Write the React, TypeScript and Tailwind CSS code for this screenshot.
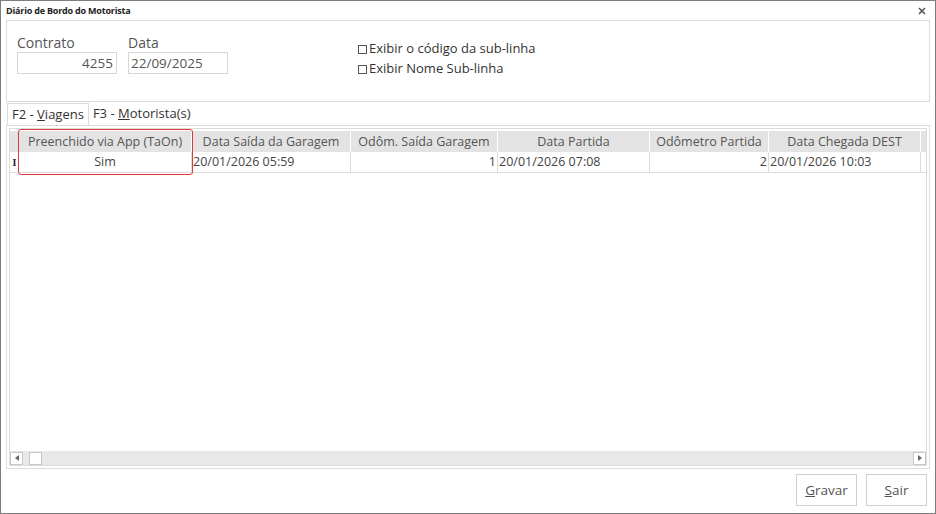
import React from "react";

const cols = [
  { title: "Preenchido via App (TaOn)", w: "w-[173px]", value: "Sim", align: "text-center" },
  { title: "Data Saída da Garagem", w: "w-[159px]", value: "20/01/2026 05:59", align: "text-left" },
  { title: "Odôm. Saída Garagem", w: "w-[147px]", value: "1", align: "text-right" },
  { title: "Data Partida", w: "w-[152px]", value: "20/01/2026 07:08", align: "text-left" },
  { title: "Odômetro Partida", w: "w-[119px]", value: "2", align: "text-right" },
  { title: "Data Chegada DEST", w: "w-[152px]", value: "20/01/2026 10:03", align: "text-left" },
];

const Checkbox = ({ label }: { label: string }) => (
  <label className="flex items-center h-[20px] text-[13px] text-[#333]">
    <span className="w-[9px] h-[9px] border border-[#555] bg-white mr-[2px]" />
    {label}
  </label>
);

export default function App() {
  return (
    <div
      className="w-[936px] h-[514px] bg-white border border-[#7d7d7d] flex flex-col overflow-hidden text-[#444]"
      style={{ fontFamily: '"Open Sans", "Noto Sans", sans-serif' }}
    >
      {/* barra de título */}
      <div className="h-[19px] flex items-center justify-between pl-[5px] pr-[9px]">
        <span className="text-[9px] font-bold text-[#222] tracking-[-0.2px]">Diário de Bordo do Motorista</span>
        <svg width="8" height="8" viewBox="0 0 8 8">
          <path d="M1 1L7 7M7 1L1 7" stroke="#555" strokeWidth="1.6" />
        </svg>
      </div>

      {/* cabeçalho */}
      <div className="mx-[5px] h-[82px] border border-[#dcdcdc] flex pl-[10px] pt-[13px]">
        <div className="flex flex-col">
          <span className="text-[14px] leading-[18px] text-[#555]">Contrato</span>
          <div className="w-[100px] h-[22px] border border-[#d6d6d6] text-right pr-[3px] text-[13.5px] leading-[20px] text-[#555]">
            4255
          </div>
        </div>
        <div className="flex flex-col ml-[11px]">
          <span className="text-[14px] leading-[18px] text-[#555]">Data</span>
          <div className="w-[100px] h-[22px] border border-[#d6d6d6] pl-[2px] text-[13.5px] leading-[20px] text-[#555]">
            22/09/2025
          </div>
        </div>
        <div className="flex flex-col ml-[130px] pt-[5px]">
          <Checkbox label="Exibir o código da sub-linha" />
          <Checkbox label="Exibir Nome Sub-linha" />
        </div>
      </div>

      {/* abas */}
      <div className="mx-[6px] mt-[1px] flex h-[22px] text-[13px]">
        <div className="px-[4px] border border-b-0 border-[#dcdcdc] bg-white leading-[21px] text-[#333]">
          F2 - <span className="underline">V</span>iagens
        </div>
        <div className="px-[4px] leading-[21px] text-[#333]">
          F3 - <span className="underline">M</span>otorista(s)
        </div>
      </div>

      {/* painel da aba */}
      <div className="mx-[5px] h-[344px] border border-[#dcdcdc] p-[2px]">
        <div className="h-full border border-[#dcdcdc] flex flex-col">
          <div className="flex-1 pt-[2px] relative">
            {/* cabeçalho da grade */}
            <div className="flex h-[21px] bg-[#e3e3e3] text-[12.5px] text-[#555]">
              <div className="w-[9px]" />
              {cols.map((c) => (
                <div key={c.title} className={`${c.w} border-r border-white text-center leading-[21px] whitespace-nowrap`}>
                  {c.title}
                </div>
              ))}
            </div>
            {/* linha */}
            <div className="flex h-[21px] text-[12.5px] text-[#444] border-b border-[#dcdcdc]">
              <div className="w-[9px] flex items-center justify-center font-bold text-[10px] text-[#222]" style={{ fontFamily: '"Liberation Serif", serif' }}>
                I
              </div>
              {cols.map((c) => (
                <div key={c.title} className={`${c.w} border-r border-[#dcdcdc] ${c.align} leading-[20px] px-[1px] whitespace-nowrap`}>
                  {c.value}
                </div>
              ))}
            </div>
            {/* destaque */}
            <div className="absolute left-[8px] top-[0px] w-[175px] h-[46px] border-[1.5px] border-[#e0393e] rounded-[3px]" />
          </div>
          {/* barra de rolagem */}
          <div className="h-[14px] bg-[#e8e8e8] flex items-center">
            <div className="w-[13px] h-[13px] bg-white border border-[#c8c8c8] flex items-center justify-center">
              <svg width="4" height="6" viewBox="0 0 4 6">
                <path d="M4 0L0 3L4 6Z" fill="#666" />
              </svg>
            </div>
            <div className="ml-[6px] w-[13px] h-[13px] bg-white border border-[#c8c8c8]" />
            <div className="flex-1" />
            <div className="w-[13px] h-[13px] bg-white border border-[#c8c8c8] flex items-center justify-center">
              <svg width="4" height="6" viewBox="0 0 4 6">
                <path d="M0 0L4 3L0 6Z" fill="#666" />
              </svg>
            </div>
          </div>
        </div>
      </div>

      {/* botões */}
      <div className="flex justify-end gap-[9px] mt-[5px] mr-[8px]">
        <button className="w-[61px] h-[32px] border border-[#cfcfcf] bg-white text-[13.5px] text-[#555]">
          <span className="underline">G</span>ravar
        </button>
        <button className="w-[61px] h-[32px] border border-[#cfcfcf] bg-white text-[13.5px] text-[#555]">
          <span className="underline">S</span>air
        </button>
      </div>
    </div>
  );
}
